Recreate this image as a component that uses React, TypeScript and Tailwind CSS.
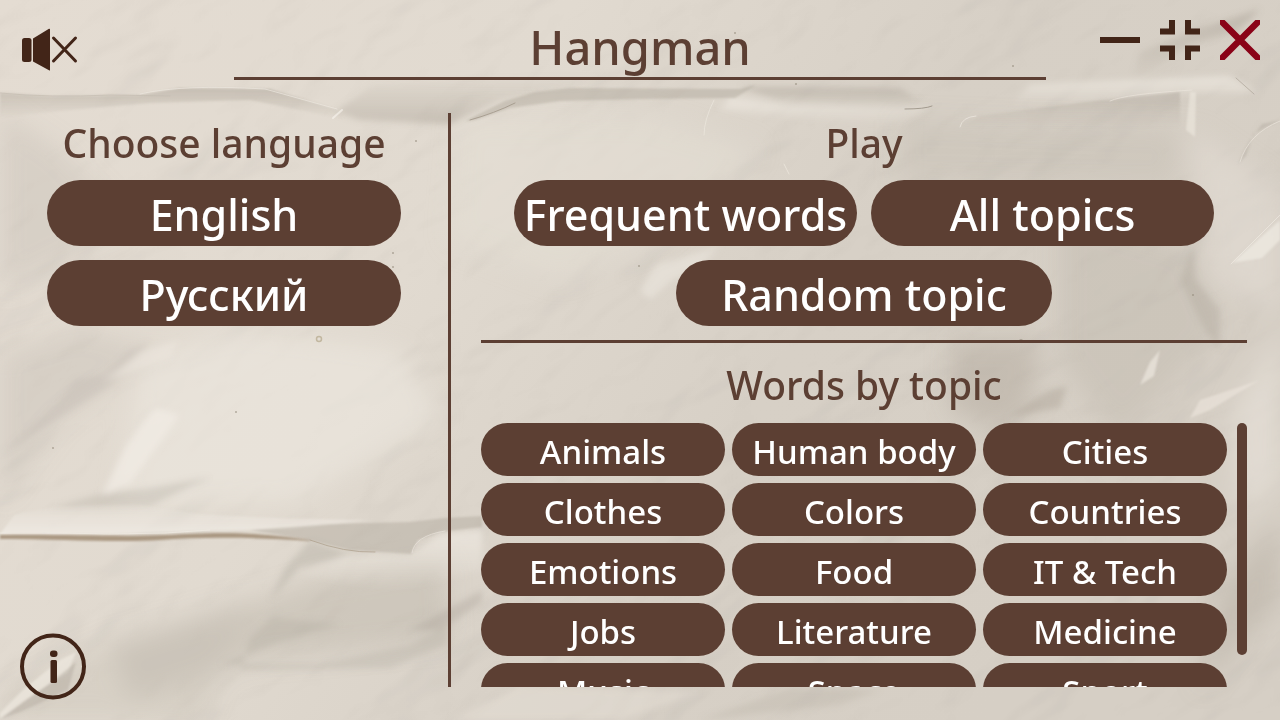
import type { ReactNode } from "react";

const topics = [
  "Animals", "Human body", "Cities",
  "Clothes", "Colors", "Countries",
  "Emotions", "Food", "IT & Tech",
  "Jobs", "Literature", "Medicine",
  "Music", "Space", "Sport",
];

function Paper() {
  return (
    <svg
      aria-hidden="true"
      className="pointer-events-none absolute inset-0 -z-10 h-full w-full"
      viewBox="0 0 1280 720"
      preserveAspectRatio="none"
    >
      <defs>
        <linearGradient id="base" x1="0" y1="0" x2="1" y2="0.35">
          <stop offset="0" stopColor="#e4dcd2" />
          <stop offset="0.4" stopColor="#e1dad0" />
          <stop offset="0.7" stopColor="#d7d0c6" />
          <stop offset="1" stopColor="#d6cfc5" />
        </linearGradient>
        <linearGradient id="shade" x1="0" y1="0" x2="0" y2="1">
          <stop offset="0" stopColor="#a39b8f" stopOpacity="0.45" />
          <stop offset="1" stopColor="#a39b8f" stopOpacity="0" />
        </linearGradient>
        <linearGradient id="shadeUp" x1="0" y1="1" x2="0" y2="0">
          <stop offset="0" stopColor="#a39b8f" stopOpacity="0.4" />
          <stop offset="1" stopColor="#a39b8f" stopOpacity="0" />
        </linearGradient>
        <linearGradient id="light" x1="0" y1="0" x2="0" y2="1">
          <stop offset="0" stopColor="#f0ebe3" stopOpacity="0.7" />
          <stop offset="1" stopColor="#f0ebe3" stopOpacity="0" />
        </linearGradient>
        <linearGradient id="lightUp" x1="0" y1="1" x2="0" y2="0">
          <stop offset="0" stopColor="#efeae3" stopOpacity="0.85" />
          <stop offset="1" stopColor="#efeae3" stopOpacity="0" />
        </linearGradient>
        <filter id="soft1" x="-10%" y="-30%" width="120%" height="160%">
          <feGaussianBlur stdDeviation="1" />
        </filter>
        <filter id="soft3" x="-10%" y="-30%" width="120%" height="160%">
          <feGaussianBlur stdDeviation="3" />
        </filter>
        <filter id="soft6" x="-20%" y="-40%" width="140%" height="180%">
          <feGaussianBlur stdDeviation="12" />
        </filter>
        <filter id="crumple" x="0" y="0" width="100%" height="100%">
          <feTurbulence type="fractalNoise" baseFrequency="0.005 0.009" numOctaves="4" seed="23" />
          <feDiffuseLighting lightingColor="#ffffff" surfaceScale="18" diffuseConstant="1.1">
            <feDistantLight azimuth="240" elevation="62" />
          </feDiffuseLighting>
        </filter>
      </defs>
      <rect width="1280" height="720" fill="url(#base)" />
      <g transform="rotate(-30 640 360)">
        <rect x="-200" y="-400" width="1680" height="1520" filter="url(#crumple)" opacity="0.15" className="mix-blend-multiply" />
      </g>

      <g filter="url(#soft6)">
        <path d="M0 110 L60 150 L130 225 L60 260 L0 290Z" fill="#beb6ab" opacity="0.3" />
        <path d="M0 355 L80 330 L160 350 L60 420 L0 500Z" fill="#beb6ab" opacity="0.3" />
        <path d="M140 360 L240 330 L400 350 L440 420 L300 500 L120 510Z" fill="#ece7df" opacity="0.6" />
        <path d="M110 645 L260 600 L320 580 L445 560 L448 640 L250 660 L130 700Z" fill="#b9b1a6" opacity="0.4" />
        <path d="M0 720 L0 700 L90 650 L250 600 L200 720Z" fill="#c0b8ad" opacity="0.3" />
        <path d="M950 340 L1040 340 L1030 410 L1000 430 L950 410Z" fill="#aaa193" opacity="0.4" />
        <path d="M1060 210 L1190 250 L1220 330 L1120 440 L1060 360Z" fill="#b7afa3" opacity="0.3" />
        <path d="M1230 420 L1280 330 L1280 480 L1240 520Z" fill="#e6e0d7" opacity="0.7" />
        <path d="M1220 590 L1280 520 L1280 600 L1200 690Z" fill="#b3ab9f" opacity="0.45" />
        <path d="M460 120 L640 115 L760 150 L660 240 L560 280 L450 240Z" fill="#e5dfd6" opacity="0.5" />
        <path d="M900 120 L1180 130 L1175 185 L900 180Z" fill="#bdb5aa" opacity="0.3" />
        <path d="M1190 130 L1280 190 L1280 310 L1210 280Z" fill="#e3dcd3" opacity="0.6" />
      </g>

      <g filter="url(#soft3)">
        <path d="M0 455 L60 400 L75 380 L105 374 L130 350 L150 342 L110 386 L40 430Z" fill="#b5ada2" opacity="0.25" />
        <path d="M102 496 L126 445 L155 408 L180 415 L158 445 L130 484Z" fill="#f0ebe4" opacity="0.8" />
        <path d="M102 382 L140 352 L180 340 L170 358Z" fill="#ece6dd" opacity="0.6" />
        <path d="M50 508 L100 494 L150 488 L210 477 L150 506Z" fill="#aaa297" opacity="0.28" />
        <path d="M345 556 L410 554 L440 535 L482 530 L482 570 L400 590 L300 575Z" fill="url(#light)" />
        <path d="M310 540 L345 552 L370 548 L330 560 L300 567 L270 600 L285 568Z" fill="#aaa297" opacity="0.35" />
        <path d="M250 638 L280 610 L275 618 L340 624 L270 645 L220 664 L320 664 L410 645 L448 625 L448 645 L390 668 L240 670Z" fill="#ada599" opacity="0.28" />
        <path d="M410 630 L482 590 L482 603 L440 630Z" fill="#a9a094" opacity="0.35" />
        <path d="M450 720 L520 686 L700 692 L620 720Z" fill="#e6e0d7" opacity="0.45" />
        <path d="M700 720 L790 688 L880 690 L840 705Z" fill="#b6aea3" opacity="0.3" />
        <path d="M640 290 L656 265 L720 246 L700 268 L672 280 L650 300Z" fill="#ebe6dd" opacity="0.6" />
        <path d="M1193 245 L1196 280 L1220 310 L1219 350 L1205 330 L1180 280Z" fill="#aca497" opacity="0.35" />
        <path d="M1140 52 L1200 28 L1260 9 L1238 31 L1190 45 L1130 85Z" fill="url(#shade)" />
        <path d="M1067 386 L1060 408 L1010 416 L1000 422 L1050 390Z" fill="#a79e91" opacity="0.4" />
        <path d="M1010 106 L1030 84 L1120 80 L1230 76 L1260 93 L1180 93 L1085 102Z" fill="url(#light)" />
        <path d="M730 97 L790 105 L900 108 L930 105 L900 125 L800 118 L720 110Z" fill="url(#light)" />
        <path d="M335 112 L372 85 L560 75 L640 76 L500 100 L450 124 L360 120Z" fill="url(#shadeUp)" />
        <path d="M740 87 L900 88 L930 107 L880 107 L780 101Z" fill="url(#shade)" />
      </g>

      <g filter="url(#soft1)">
        <path d="M0 93 L50 96 L140 95 L180 88 L270 89 L335 109 L345 119 L250 100 L150 103 L70 110 L0 117Z" fill="url(#shade)" />
        <path d="M465 121 L505 101 L535 92 L570 88 L740 89 L756 85 L735 98 L640 99 L560 101 L510 108 L475 120Z" fill="#a89f94" opacity="0.4" />
        <path d="M960 127 L980 116 L1085 102 L1180 92 L1180 128 L960 128Z" fill="url(#shade)" opacity="0.8" />
        <path d="M1190 92 L1196 92 L1195 137 L1186 130Z" fill="#eee9e0" opacity="0.6" />
        <path d="M1280 120 L1253 134 L1246 156 L1238 164 L1250 140 L1262 124Z" fill="#aaa195" opacity="0.35" />
        <path d="M1280 220 L1232 263 L1262 258 L1280 240Z" fill="#efebe2" opacity="0.7" />
        <path d="M1160 350 L1154 376 L1140 385 L1150 362Z" fill="#ece7de" opacity="0.7" />
        <path d="M1190 418 L1200 400 L1260 380 L1210 410Z" fill="#e9e3da" opacity="0.7" />
        <path d="M0 534 L15 514 L60 506 L130 503 L200 514 L280 518 L370 520 L290 529 L200 531 L110 534Z" fill="url(#lightUp)" />
        <path d="M250 530 L330 524 L410 522 L445 518 L482 516 L482 527 L440 532 L418 540 L411 554 L350 550 L310 540Z" fill="#aaa297" opacity="0.4" />
        <path d="M0 713 L25 688 L60 660 L76 652 L68 672 L25 700 L0 719Z" fill="#eee8df" opacity="0.7" />
        <path d="M0 719 L50 683 L76 662 L68 690 L20 712Z" fill="#a59d91" opacity="0.35" />
      </g>

      <path d="M0 535 C60 534 120 537 165 535 S240 530 310 540 L310 541 C250 537 200 537 160 540 S60 539 0 539Z" fill="#a08c75" opacity="0.85" filter="url(#soft1)" />
      <g fill="none" strokeLinecap="round" opacity="0.65">
        <path d="M310 540 Q345 553 375 552" stroke="#a99a86" strokeWidth="1" />
        <path d="M0 533 L60 533 L110 534 L165 533 L210 530" stroke="#f1ece5" strokeWidth="1" />
        <path d="M140 94 Q182 84 265 89 L337 109" stroke="#eee9e1" strokeWidth="1" />
        <path d="M0 93 Q50 98 110 95 L170 96" stroke="#c4bcb1" strokeWidth="1" />
        <path d="M470 120 Q495 113 515 103" stroke="#968b7c" strokeWidth="1" />
        <path d="M333 118 L342 110" stroke="#f7f3ed" strokeWidth="2" />
        <path d="M905 109 Q925 109 932 106" stroke="#867d70" strokeWidth="1" />
        <path d="M960 127 Q962 117 976 116" stroke="#f2ede5" strokeWidth="1" />
        <path d="M1110 101 Q1125 94 1192 90" stroke="#ece6dd" strokeWidth="1" />
        <path d="M1236 78 L1254 94" stroke="#aaa195" strokeWidth="1" />
        <path d="M704 135 Q704 120 714 100" stroke="#eee9e0" strokeWidth="1" />
        <path d="M784 164 L789 174" stroke="#f0ebe2" strokeWidth="1" />
        <path d="M1231 264 L1280 215" stroke="#f1ece4" strokeWidth="1" />
        <path d="M1240 162 Q1248 134 1280 121" stroke="#eee8df" strokeWidth="1" />
        <path d="M412 553 Q414 536 445 531" stroke="#ece6de" strokeWidth="1" />
      </g>
      <g fill="#8d8475" opacity="0.6">
        <circle cx="53" cy="448" r="1" />
        <circle cx="236" cy="412" r="1" />
        <circle cx="393" cy="253" r="1" />
        <circle cx="416" cy="141" r="1" />
        <circle cx="393" cy="267" r="1" />
        <circle cx="1013" cy="66" r="1" />
        <circle cx="1193" cy="295" r="1" />
        <circle cx="796" cy="84" r="1" />
        <circle cx="735" cy="33" r="1" />
        <circle cx="639" cy="266" r="1" />
        <circle cx="1021" cy="341" r="2" />
      </g>
      <circle cx="319" cy="339" r="2.5" fill="none" stroke="#b3a68a" strokeWidth="1.5" opacity="0.7" />
    </svg>
  );
}

function Heading({ children }: { children: ReactNode }) {
  return <h2 className="text-center text-[39px] leading-[60px] font-medium">{children}</h2>;
}

function PillButton({ children, className }: { children: ReactNode; className: string }) {
  return (
    <button
      type="button"
      className={`h-[66px] rounded-full bg-[#5c3f33] pt-1 text-[43px] leading-[60px] font-medium whitespace-nowrap text-white ${className}`}
    >
      {children}
    </button>
  );
}

export default function App() {
  return (
    <div className="relative isolate flex h-screen flex-col overflow-hidden font-['Noto_Sans',sans-serif] text-[#5c3f33]">
      <Paper />
      <header className="flex items-start justify-between px-5">
        <div className="flex-1 pt-7">
          <button type="button" aria-label="Unmute" className="block">
            <svg className="h-[43px] w-[60px]" viewBox="0 0 60 43" fill="#422518">
              <rect x="2" y="10" width="9.5" height="24" rx="2.5" />
              <path d="M13 10.5 29 .8Q30 .5 30 1.5V42Q30 43 29 42.3L13 33.5Z" />
              <path d="m33.500 10 22 23M55.500 10l-22 23" fill="none" stroke="#422518" strokeWidth="3" strokeLinecap="round" />
            </svg>
          </button>
        </div>
        <h1 className="w-[63.500vw] border-b-[3px] border-[#5c3f33] pt-[18px] text-center text-[47px] leading-[59px] font-medium">
          Hangman
        </h1>
        <div className="flex flex-1 justify-end gap-5 pt-5">
          <button type="button" aria-label="Minimize">
            <svg className="size-10" viewBox="0 0 40 40" fill="#422518">
              <path d="M0 17h40v6H0z" />
            </svg>
          </button>
          <button type="button" aria-label="Exit full screen">
            <svg className="size-10" viewBox="0 0 40 40" fill="none" stroke="#422518" strokeWidth="6">
              <path d="M12 0v11.500H0M28 0v11.500h12M12 40V28.500H0M28 40V28.500h12" />
            </svg>
          </button>
          <button type="button" aria-label="Close">
            <svg className="size-10" viewBox="0 0 40 40" fill="none" stroke="#8a0217" strokeWidth="6.5">
              <path d="m0 0 40 40M40 0 0 40" />
            </svg>
          </button>
        </div>
      </header>

      <main className="flex min-h-0 flex-1 pt-[33px]">
        <section className="flex w-[35vw] flex-col pb-5">
          <Heading>Choose language</Heading>
          <div className="mt-[7px] flex flex-col gap-[14px] px-[47px]">
            <PillButton className="w-full">English</PillButton>
            <PillButton className="w-full">Русский</PillButton>
          </div>
          <button type="button" aria-label="About" className="mt-auto ml-5 w-fit">
            <svg className="block size-[67px]" viewBox="0 0 67 67" fill="#422518">
              <circle cx="33" cy="33.500" r="31" fill="none" stroke="#422518" strokeWidth="4" />
              <rect x="30" y="17.500" width="7.500" height="6.500" rx="3" />
              <rect x="30.500" y="27" width="6.500" height="23" rx="1.500" />
            </svg>
          </button>
        </section>
        <div className="mb-[33px] w-[3px] bg-[#5c3f33]" />
        <section className="flex min-w-0 flex-1 flex-col pr-[33px] pb-[33px] pl-[30px]">
          <Heading>Play</Heading>
          <div className="mt-[7px] flex flex-wrap justify-center gap-[14px] px-[33px]">
            <PillButton className="min-w-0 flex-1">Frequent words</PillButton>
            <PillButton className="min-w-0 flex-1">All topics</PillButton>
            <div className="flex w-full justify-center">
              <PillButton className="w-[376px]">Random topic</PillButton>
            </div>
          </div>
          <div className="mt-[14px] h-[3px] shrink-0 bg-[#5c3f33]" />
          <div className="pt-3 pb-2">
            <Heading>Words by topic</Heading>
          </div>
          <div className="flex min-h-0 flex-1 gap-[10px]">
            <div className="grid flex-1 auto-rows-[53px] grid-cols-3 gap-[7px] overflow-y-auto [scrollbar-width:none]">
              {topics.map((topic) => (
                <button
                  key={topic}
                  type="button"
                  className="rounded-full bg-[#5c3f33] pt-1 text-[33px] leading-[48px] font-medium whitespace-nowrap text-white"
                >
                  {topic}
                </button>
              ))}
            </div>
            <div className="h-[88%] w-[10px] rounded-full bg-[#5c3f33]" />
          </div>
        </section>
      </main>
    </div>
  );
}
